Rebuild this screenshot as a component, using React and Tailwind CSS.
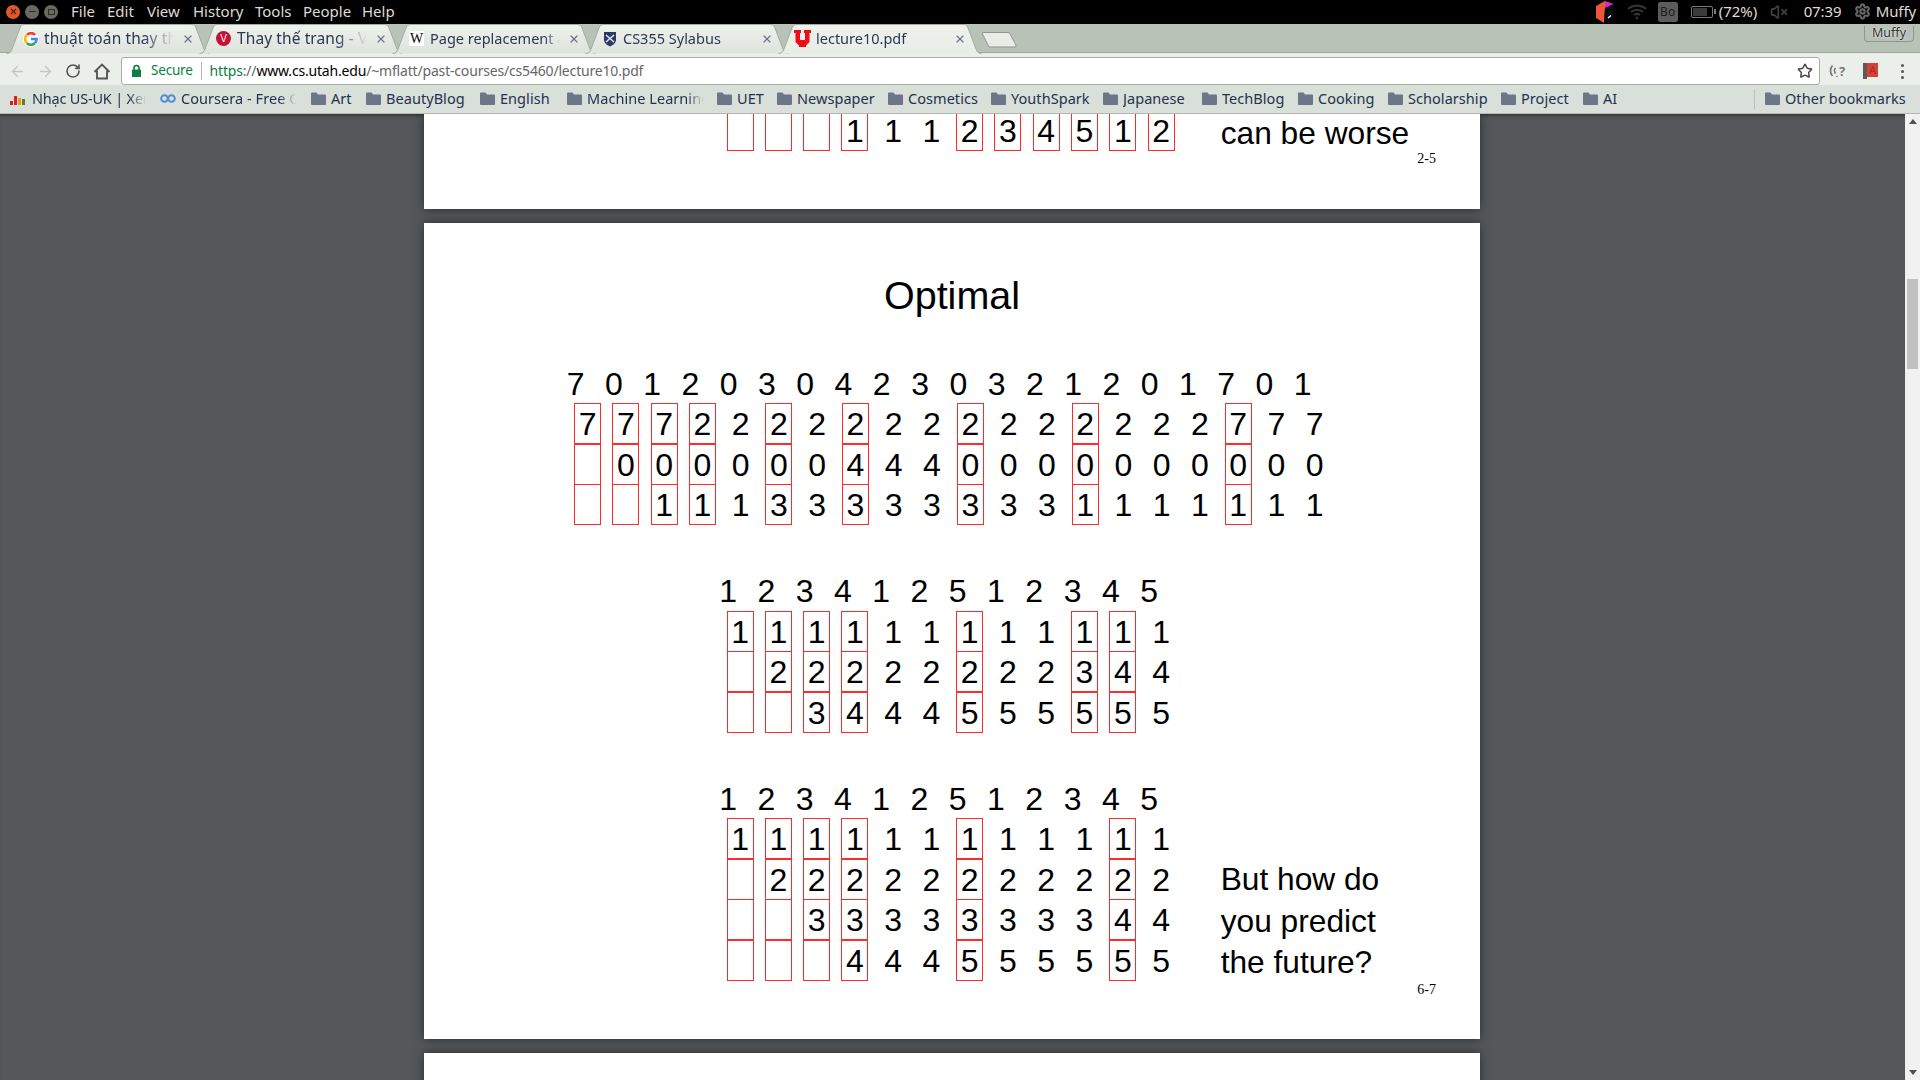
import React from 'react';
import { ArrowLeft, ArrowRight, RotateCw, Star, X, VolumeX, Settings } from 'lucide-react';

const uiFont = "font-['Noto_Sans','Open_Sans',sans-serif]";

const menus = [
  { name: 'File', width: 'w-[36px]' },
  { name: 'Edit', width: 'w-[40px]' },
  { name: 'View', width: 'w-[46px]' },
  { name: 'History', width: 'w-[62px]' },
  { name: 'Tools', width: 'w-[48px]' },
  { name: 'People', width: 'w-[59px]' },
  { name: 'Help', width: 'w-[40px]' },
];

const bookmarks = [
  { name: 'Art', width: 'w-[55px]' },
  { name: 'BeautyBlog', width: 'w-[114px]' },
  { name: 'English', width: 'w-[87px]' },
  { name: 'Machine Learning', width: 'w-[150px]', fade: true },
  { name: 'UET', width: 'w-[60px]' },
  { name: 'Newspaper', width: 'w-[111px]' },
  { name: 'Cosmetics', width: 'w-[103px]' },
  { name: 'YouthSpark', width: 'w-[112px]' },
  { name: 'Japanese', width: 'w-[99px]' },
  { name: 'TechBlog', width: 'w-[96px]' },
  { name: 'Cooking', width: 'w-[90px]' },
  { name: 'Scholarship', width: 'w-[113px]' },
  { name: 'Project', width: 'w-[82px]' },
  { name: 'AI', width: 'w-[60px]' },
];

function GoogleIcon() {
  return (
    <div className="w-[16px] h-[16px] rounded-full bg-white flex items-center justify-center shrink-0">
      <svg width="14" height="14" viewBox="0 0 14 14" fill="none" strokeWidth="2.6">
        <path d="M11.2 3 A5.6 5.6 0 0 0 3 2.8" stroke="#ea4335" />
        <path d="M3 2.8 A5.6 5.6 0 0 0 3 11.2" stroke="#fbbc05" />
        <path d="M3 11.2 A5.6 5.6 0 0 0 11 11" stroke="#34a853" />
        <path d="M11 11 A5.6 5.6 0 0 0 12.6 7 L7 7" stroke="#4285f4" />
      </svg>
    </div>
  );
}

function VibloIcon() {
  return (
    <div className="w-[15px] h-[15px] rounded-full bg-[#c4113a] text-white text-[10px] leading-[15px] text-center font-['Liberation_Sans',sans-serif] shrink-0">
      V
    </div>
  );
}

function WikiIcon() {
  return (
    <div className="w-[15px] h-[15px] bg-white text-black text-[14px] leading-[15px] text-center font-['Liberation_Serif',serif] shrink-0">
      W
    </div>
  );
}

function ShieldIcon() {
  return (
    <svg width="14" height="16" viewBox="0 0 14 16">
      <path d="M1 1 H13 V9 C13 12.5 9 14.5 7 15.5 C5 14.5 1 12.5 1 9 Z" fill="#2b3a67" />
      <path d="M3 4 L11 11 M11 4 L3 11" stroke="#dfe3ea" strokeWidth="1.6" />
    </svg>
  );
}

function UtahIcon() {
  return (
    <svg width="17" height="17" viewBox="0 0 17 17" className="shrink-0">
      <path d="M0 0 H7 V3 H6 V10 H11 V3 H10 V0 H17 V3 H15.5 V12 L12 15.5 V17 H5 V15.5 L1.5 12 V3 H0 Z" fill="#f00d15" />
    </svg>
  );
}

const tabs = [
  { title: 'thuật toán thay thế trang', icon: <GoogleIcon />, big: true },
  { title: 'Thay thế trang - Viblo', icon: <VibloIcon />, big: true },
  { title: 'Page replacement algorithm', icon: <WikiIcon /> },
  { title: 'CS355 Sylabus', icon: <ShieldIcon /> },
  { title: 'lecture10.pdf', icon: <UtahIcon />, active: true },
];

function Tab({ tab, index }) {
  return (
    <div className={`relative w-[204px] h-[29px] -mr-[11px] shrink-0 ${tab.active ? 'z-10' : ''}`}>
      <svg className="absolute inset-0" width="204" height="30" viewBox="0 0 204 30">
        <defs>
          <linearGradient id={`tabfill${index}`} x1="0" y1="0" x2="0" y2="1">
            <stop offset="0" stopColor="#eef1ec" />
            <stop offset="1" stopColor={tab.active ? '#e9ede7' : '#dfe3dd'} />
          </linearGradient>
        </defs>
        <path
          d="M0.5,29.5 C4,29.5 5,27.5 6,25 L14,4 C15,1.5 16,0.5 19,0.5 H185 C188,0.5 189,1.5 190,4 L198,25 C199,27.5 200,29.5 203.5,29.5"
          fill={`url(#tabfill${index})`}
          stroke="#a4aba2"
        />
      </svg>
      <div className="relative h-full flex items-center pl-[17px] pr-[16px]">
        <div className="w-[15px] shrink-0 flex justify-center">{tab.icon}</div>
        <div
          className={`ml-[6px] flex-1 min-w-0 whitespace-nowrap overflow-hidden text-[#2a3852] ${
            tab.big
              ? 'text-[15.5px] tracking-[0.1px] [mask-image:linear-gradient(to_right,black_76%,transparent)]'
              : 'text-[14.5px] [mask-image:linear-gradient(to_right,black_88%,transparent)]'
          }`}
        >
          {tab.title}
        </div>
        <X className="ml-[8px] w-[12px] h-[12px] text-[#6b7488] shrink-0" strokeWidth={2.4} />
      </div>
    </div>
  );
}

function FolderIcon() {
  return (
    <svg width="15" height="13" viewBox="0 0 15 13" className="shrink-0">
      <path d="M0 1.5 Q0 0.5 1 0.5 H5.5 L7 2.5 H14 Q15 2.5 15 3.5 V12 Q15 13 14 13 H1 Q0 13 0 12 Z" fill="#6d7589" />
    </svg>
  );
}

function Bookmark({ item }) {
  return (
    <div className={`flex items-center shrink-0 ${item.width}`}>
      <FolderIcon />
      <span
        className={`ml-[5px] whitespace-nowrap overflow-hidden text-[14.5px] tracking-[0.05px] text-[#24324f] ${
          item.fade ? 'w-[117px] [mask-image:linear-gradient(to_right,black_85%,transparent)]' : ''
        }`}
      >
        {item.name}
      </span>
    </div>
  );
}

function TopBar() {
  return (
    <div className={`h-[24px] shrink-0 bg-black flex items-center pb-px text-[#dfdbd2] text-[15px] ${uiFont}`}>
      <div className="flex items-center pl-[6px] gap-[5px] w-[71px] shrink-0">
        <div className="w-[14px] h-[14px] rounded-full bg-[#e0592a] flex items-center justify-center">
          <X className="w-[9px] h-[9px] text-[#4a2010]" strokeWidth={3} />
        </div>
        <div className="w-[14px] h-[14px] rounded-full bg-[#6a6a62] flex items-center justify-center">
          <div className="w-[7px] h-px bg-[#2c2c28]" />
        </div>
        <div className="w-[14px] h-[14px] rounded-full bg-[#6a6a62] flex items-center justify-center">
          <div className="w-[7px] h-[6px] border border-[#2c2c28]" />
        </div>
      </div>
      <div className="flex">
        {menus.map((m) => (
          <span key={m.name} className={m.width}>{m.name}</span>
        ))}
      </div>
      <div className="ml-auto flex items-center h-full">
        <svg width="20" height="22" viewBox="0 0 20 22" className="mr-[12px]">
          <polygon points="10,0 19,3 10,7" fill="#d02cc0" />
          <polygon points="1,5 10,0 10,7 9,22 1,17" fill="#f0553a" />
          <polygon points="10,7 19,3 19,17 9,22" fill="#0a0a0a" />
          <path d="M13 17 L16 14.5" stroke="#fff" strokeWidth="1.4" />
        </svg>
        <svg width="20" height="16" viewBox="0 0 20 16" fill="none" stroke="#333" strokeWidth="2.2" className="mr-[11px]">
          <path d="M1 5 C6 0.5 14 0.5 19 5" />
          <path d="M4 8 C7.5 5 12.5 5 16 8" />
          <path d="M7 11 C8.8 9.6 11.2 9.6 13 11" />
          <circle cx="10" cy="14" r="1.4" fill="#333" stroke="none" />
        </svg>
        <div className="w-[20px] h-[20px] rounded-[2px] bg-[#5b5b5b] text-[#1c1c1c] text-[12px] leading-[20px] text-center mr-[13px]">Bo</div>
        <div className="w-[22px] h-[12px] border border-[#777] rounded-[2px] flex mr-[1px] p-px">
          <div className="w-[14px] bg-[#3a3a3a]" />
        </div>
        <div className="w-[2px] h-[5px] bg-[#777] mr-[3px]" />
        <span className="w-[51px] whitespace-nowrap">(72%)</span>
        <VolumeX className="w-[18px] h-[18px] text-[#3c3c3c] mr-[16px]" strokeWidth={2.4} />
        <span className="w-[50px] tracking-[-0.1px]">07:39</span>
        <Settings className="w-[17px] h-[17px] text-[#666] mr-[5px]" strokeWidth={3} />
        <span className="mr-[4px] tracking-[-0.1px]">Muffy</span>
      </div>
    </div>
  );
}

function TabStrip() {
  return (
    <div className={`h-[29px] shrink-0 bg-[#b8c2b6] flex pl-[6px] border-b border-[#a0a69e] ${uiFont}`}>
      {tabs.map((t, i) => (
        <Tab key={t.title} tab={t} index={i} />
      ))}
      <svg width="35" height="16" viewBox="0 0 35 16" className="ml-[11px] mt-[8px] shrink-0">
        <path d="M1,0.5 H26 Q27.5,0.5 28,2 L34,13 Q34.5,15 33,15 H8 Q7,15 6.5,14 L0.5,2 Q0,0.5 1,0.5 Z" fill="#e9ede7" stroke="#8f968d" />
      </svg>
      <div className="ml-auto mt-[2px] mr-[6px] w-[50px] h-[16px] border border-t-0 border-[#8f968d] rounded-b-[4px] flex items-center justify-center text-[12.5px] text-[#333] [text-shadow:0_0_2px_#fff]">
        Muffy
      </div>
    </div>
  );
}

function Toolbar() {
  return (
    <div className={`h-[32px] shrink-0 bg-[#ebefe9] flex items-end ${uiFont}`}>
      <div className="h-[28px] w-[121px] shrink-0 flex items-center pl-[9px]">
        <ArrowLeft className="w-[17px] h-[17px] text-[#c3c7c2]" strokeWidth={2} />
        <ArrowRight className="ml-[11px] w-[17px] h-[17px] text-[#c3c7c2]" strokeWidth={2} />
        <RotateCw className="ml-[11px] w-[16px] h-[16px] text-[#555]" strokeWidth={2.4} />
        <svg width="18" height="17" viewBox="0 0 18 17" fill="none" stroke="#555" strokeWidth="1.9" className="ml-[12px]">
          <path d="M1.5 9 L9 1.5 L16.5 9" />
          <path d="M4 7.5 V15.5 H14 V7.5" />
        </svg>
      </div>
      <div className="h-[28px] w-[1699px] shrink-0 bg-white border border-[#a9ada8] rounded-[3px] flex items-center pb-px pl-[9px] pr-[6px]">
        <svg width="11" height="13" viewBox="0 0 11 13" className="shrink-0">
          <path d="M3 6 V4 A2.5 2.5 0 0 1 8 4 V6" fill="none" stroke="#0b8043" strokeWidth="1.6" />
          <rect x="1" y="5.5" width="9" height="7.5" rx="0.5" fill="#0b8043" />
        </svg>
        <span className="ml-[9px] text-[13.5px] tracking-[-0.2px] text-[#0b8043]">Secure</span>
        <div className="ml-[8px] w-px h-[18px] bg-[#b5b5b5]" />
        <span className="ml-[8px] text-[14px] tracking-[-0.18px] text-[#666] whitespace-nowrap">
          <span className="text-[#0b8043]">https</span>
          ://
          <span className="text-black">www.cs.utah.edu</span>
          /~mflatt/past-courses/cs5460/lecture10.pdf
        </span>
        <Star className="ml-auto w-[16px] h-[16px] text-[#444]" strokeWidth={2.2} />
      </div>
      <div className="h-[28px] flex-1 flex items-center">
        <div className="ml-[9px] w-[18px] h-[16px] relative flex items-center justify-center">
          <svg width="18" height="16" viewBox="0 0 18 16" fill="none" stroke="#777" strokeWidth="1.7" className="absolute inset-0">
            <path d="M3.5 2.5 C0.8 5.5 0.8 10 3.5 13" />
            <path d="M6.5 5 C5.2 6.5 5.2 9 6.5 10.5" />
            <circle cx="8" cy="13.5" r="0.8" fill="#777" stroke="none" />
          </svg>
          <span className="ml-[8px] text-[13px] leading-[16px] font-bold text-[#777]">?</span>
        </div>
        <div className="ml-[16px] w-[15px] h-[16px] flex">
          <div className="w-[4px] h-full bg-[#5a5a5a]" />
          <div className="flex-1 bg-[#d8403a] border-b-2 border-[#eeeeee] text-[#a92c28] text-[11px] leading-[14px] text-center">A</div>
        </div>
        <div className="ml-[23px] flex flex-col gap-[3px]">
          <div className="w-[3px] h-[3px] rounded-full bg-[#555]" />
          <div className="w-[3px] h-[3px] rounded-full bg-[#555]" />
          <div className="w-[3px] h-[3px] rounded-full bg-[#555]" />
        </div>
      </div>
    </div>
  );
}

function BookmarksBar() {
  return (
    <div className={`h-[29px] shrink-0 bg-[#d9dfd9] border-b border-[#b4b8b3] flex items-center pb-[1px] ${uiFont}`}>
      <div className="flex items-center w-[160px] shrink-0 pl-[10px]">
        <svg width="16" height="12" viewBox="0 0 16 12" className="shrink-0">
          <rect x="0" y="8" width="3" height="4" fill="#e02020" />
          <rect x="4" y="3" width="3" height="9" fill="#e02020" />
          <rect x="8" y="5" width="3" height="7" fill="#e8a010" />
          <rect x="12" y="6" width="3" height="6" fill="#6a7a20" />
        </svg>
        <span className="ml-[6px] w-[114px] whitespace-nowrap overflow-hidden text-[#24324f] text-[14.5px] tracking-[-0.2px] [mask-image:linear-gradient(to_right,black_85%,transparent)]">
          Nhạc US-UK | Xem
        </span>
      </div>
      <div className="flex items-center w-[151px] shrink-0">
        <svg width="16" height="9" viewBox="0 0 16 9" fill="none" stroke="#4a8fd8" strokeWidth="2" className="shrink-0">
          <circle cx="4.5" cy="4.5" r="3.3" />
          <circle cx="11.5" cy="4.5" r="3.3" />
        </svg>
        <span className="ml-[5px] w-[115px] whitespace-nowrap overflow-hidden text-[#24324f] text-[14.5px] tracking-[0.05px] [mask-image:linear-gradient(to_right,black_85%,transparent)]">
          Coursera - Free Online
        </span>
      </div>
      {bookmarks.map((b) => (
        <Bookmark key={b.name} item={b} />
      ))}
      <div className="ml-[111px] w-px h-[20px] bg-[#bcc1bb]" />
      <div className="ml-[10px]">
        <Bookmark item={{ name: 'Other bookmarks', width: '' }} />
      </div>
    </div>
  );
}

// one cell of a frame table, a blank char means an empty frame
function Cell({ value, boxed }) {
  return (
    <div className="h-[40.5px] flex justify-center">
      <div className={`w-[27px] h-[41px] pt-[1px] flex items-center justify-center border ${boxed ? 'border-[#ff2a2a]' : 'border-transparent'}`}>
        {value.trim()}
      </div>
    </div>
  );
}

function FrameTable({ refs, rows, boxes }) {
  return (
    <div className="font-['Liberation_Sans',sans-serif] text-[32px] text-black">
      {refs && (
        <div className="flex h-[40px] pt-[1px] items-center -ml-[12px]">
          {refs.split('').map((d, i) => (
            <div key={i} className="w-[38.28px] text-center shrink-0">{d}</div>
          ))}
        </div>
      )}
      {rows.map((row, r) => (
        <div key={r} className="flex">
          {row.split('').map((d, i) => (
            <div key={i} className="w-[38.28px] shrink-0">
              <Cell value={d} boxed={boxes.includes(i)} />
            </div>
          ))}
        </div>
      ))}
    </div>
  );
}

function PageNumber({ children }) {
  return (
    <div className="pr-[44px] text-right font-['Liberation_Serif',serif] text-[14px] leading-[14px] text-black">
      {children}
    </div>
  );
}

const pageShadow = 'shadow-[0_0_10px_rgba(0,0,0,0.5)]';

function PdfPages() {
  return (
    <div className="flex-1 min-w-0 bg-[#54585b] overflow-hidden flex flex-col items-center pr-px shadow-[inset_0_4px_4px_-3px_rgba(0,0,0,0.5)]">
      <div className={`w-[1056px] h-[95px] shrink-0 bg-white flex flex-col justify-end pb-[43px] ${pageShadow}`}>
        <div className="flex ml-[297px] h-[42px] shrink-0">
          <FrameTable rows={['   111234512']} boxes={[0, 1, 2, 3, 6, 7, 8, 9, 10, 11]} />
          <div className="ml-[40.5px] pt-[3px] text-[31.7px] leading-[41px] font-['Liberation_Sans',sans-serif] text-black whitespace-nowrap">can be worse</div>
        </div>
        <PageNumber>2-5</PageNumber>
      </div>

      <div className={`w-[1056px] h-[816px] shrink-0 mt-[14px] bg-white pt-[42px] ${pageShadow}`}>
        <h1 className="h-[60px] text-center text-[39.5px] leading-[60px] text-black font-['Liberation_Sans',sans-serif]">Optimal</h1>
        <div className="mt-[38px] ml-[144.5px]">
          <FrameTable
            refs="70120304230321201701"
            rows={['77722222222222222777', ' 0000004440000000000', '  111333333331111111']}
            boxes={[0, 1, 2, 3, 5, 7, 10, 13, 17]}
          />
        </div>
        <div className="mt-[46px] ml-[297px]">
          <FrameTable
            refs="123412512345"
            rows={['111111111111', ' 22222222344', '  3444555555']}
            boxes={[0, 1, 2, 3, 6, 9, 10]}
          />
        </div>
        <div className="mt-[46px] ml-[297px] flex">
          <FrameTable
            refs="123412512345"
            rows={['111111111111', ' 22222222222', '  3333333344', '   444555555']}
            boxes={[0, 1, 2, 3, 6, 10]}
          />
          <div className="ml-[40.5px] pt-[81px] text-[31.7px] leading-[41.5px] font-['Liberation_Sans',sans-serif] text-black whitespace-nowrap">
            <div>But how do</div>
            <div>you predict</div>
            <div>the future?</div>
          </div>
        </div>
        <div className="-mt-[1px]"><PageNumber>6-7</PageNumber></div>
      </div>

      <div className={`w-[1056px] h-[300px] shrink-0 mt-[14px] bg-white ${pageShadow}`} />
    </div>
  );
}

function Scrollbar() {
  return (
    <div className="w-[15px] shrink-0 bg-[#f1f1f1] flex flex-col items-center">
      <div className="mt-[5px] w-0 h-0 border-x-[4px] border-x-transparent border-b-[5px] border-b-[#505050]" />
      <div className="mt-[155px] w-[11px] h-[90px] bg-[#c1c1c1]" />
      <div className="mt-auto mb-[5px] w-0 h-0 border-x-[4px] border-x-transparent border-t-[5px] border-t-[#505050]" />
    </div>
  );
}

export default function App() {
  return (
    <div className="w-[1920px] h-[1080px] overflow-hidden flex flex-col">
      <TopBar />
      <TabStrip />
      <Toolbar />
      <BookmarksBar />
      <div className="flex-1 min-h-0 flex">
        <PdfPages />
        <Scrollbar />
      </div>
    </div>
  );
}
